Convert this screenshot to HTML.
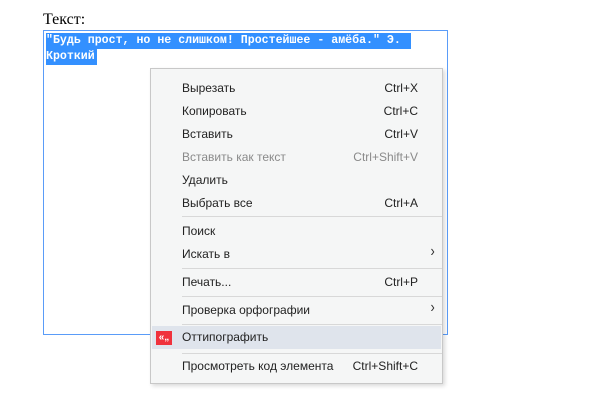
<!DOCTYPE html>
<html><head><style>
body{margin:0;width:612px;height:408px;background:#fff;position:relative;overflow:hidden;font-family:"Liberation Sans",sans-serif}
.lbl{position:absolute;left:43px;top:11px;font-family:"Liberation Serif",serif;font-size:16px;color:#000}
.ta{position:absolute;left:43px;top:30px;width:405px;height:305px;border:1px solid #5a9cf8;box-sizing:border-box}
.sel{position:absolute;left:46px;font-family:"Liberation Mono","DejaVu Sans Mono",monospace;font-weight:bold;font-size:11.6px;color:#fff;background:#3390ff;line-height:16px;height:16px;white-space:nowrap;overflow:hidden}
.menu{position:absolute;left:150px;top:68px;width:293px;height:316px;background:#f5f6f6;border:1px solid #c8c8c8;box-sizing:border-box;box-shadow:2px 2px 4px rgba(0,0,0,.15)}
.it{position:absolute;left:31px;font-size:12px;color:#222;line-height:14px}
.sc{position:absolute;right:24px;font-size:12px;color:#222;line-height:14px}
.dis{color:#8a8a8a}
.sep{position:absolute;left:31px;right:0;height:1px;background:#d8d8d8}
.hl{position:absolute;left:1px;right:1px;top:257px;height:23px;background:#dfe4ec}
.arr{position:absolute;right:7px;font-size:16px;color:#333;transform:scaleX(.8)}
</style></head><body>
<div class="lbl">Текст:</div>
<div class="ta"></div>
<div class="sel" style="top:33px;width:365px">"Будь прост, но не слишком! Простейшее - амёба." Э.</div>
<div class="sel" style="top:49px;width:51px">Кроткий</div>
<div class="menu">
<div class="it" style="top:12px">Вырезать</div><div class="sc" style="top:12px">Ctrl+X</div>
<div class="it" style="top:35px">Копировать</div><div class="sc" style="top:35px">Ctrl+C</div>
<div class="it" style="top:58px">Вставить</div><div class="sc" style="top:58px">Ctrl+V</div>
<div class="it dis" style="top:81px">Вставить как текст</div><div class="sc dis" style="top:81px">Ctrl+Shift+V</div>
<div class="it" style="top:104px">Удалить</div>
<div class="it" style="top:127px">Выбрать все</div><div class="sc" style="top:127px">Ctrl+A</div>
<div class="sep" style="top:147px"></div>
<div class="it" style="top:155px">Поиск</div>
<div class="it" style="top:178px">Искать в</div><div class="arr" style="top:174px">›</div>
<div class="sep" style="top:199px"></div>
<div class="it" style="top:206px">Печать...</div><div class="sc" style="top:206px">Ctrl+P</div>
<div class="sep" style="top:227px"></div>
<div class="it" style="top:234px">Проверка орфографии</div><div class="arr" style="top:230px">›</div>
<div class="sep" style="top:255px"></div>
<div class="hl"></div>
<div style="position:absolute;left:5px;top:262px;width:16px;height:14px;background:#f0323c;color:#fff;font-size:10px;font-weight:bold;line-height:13px;text-align:center">«„</div>
<div class="it" style="top:261px">Оттипографить</div>
<div class="sep" style="top:284px"></div>
<div class="it" style="top:290px">Просмотреть код элемента</div><div class="sc" style="top:290px">Ctrl+Shift+C</div>
</div>
</body></html>
